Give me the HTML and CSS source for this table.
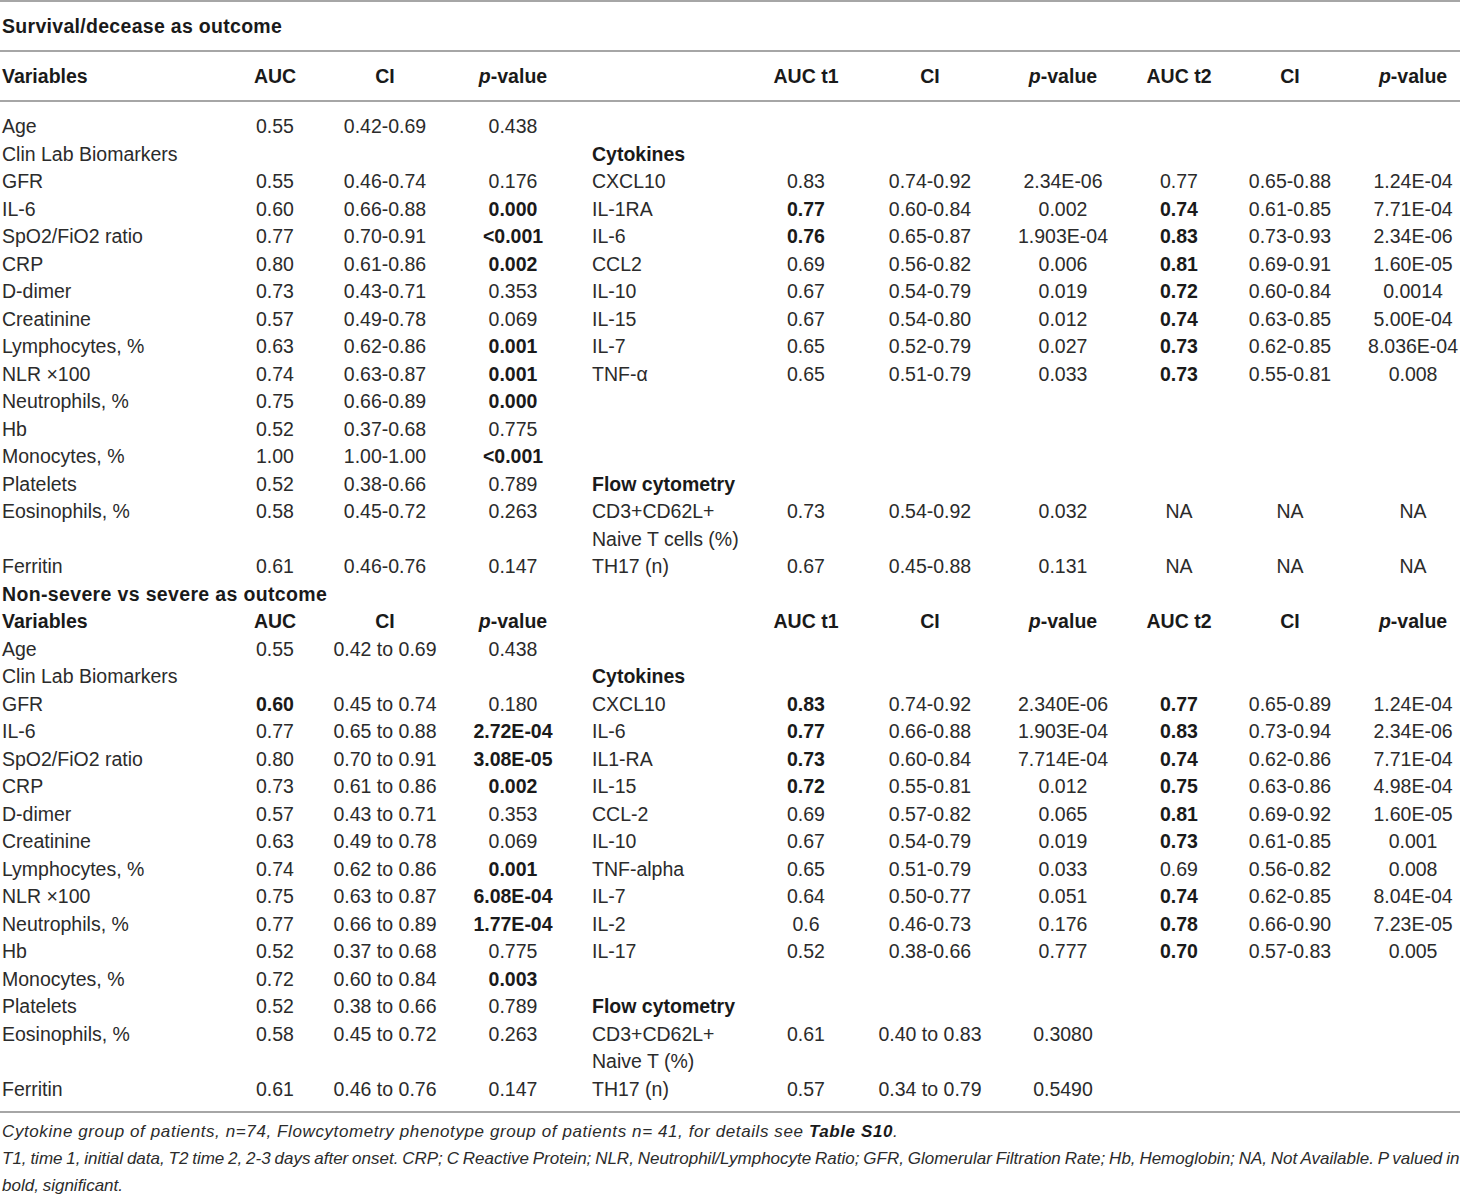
FILE: index.html
```html
<!DOCTYPE html>
<html lang="en">
<head>
<meta charset="utf-8">
<title>AUC table</title>
<link rel="stylesheet" href="styles.css">
</head>
<body>
<table class="auc">
<colgroup>
<col class="w1"><col class="w2"><col class="w3"><col class="w4"><col class="w5"><col class="w6"><col class="w7"><col class="w8"><col class="w9"><col class="w10"><col class="w11">
</colgroup>
<thead>
<tr class="title"><th colspan="11">Survival/decease as outcome</th></tr>
<tr class="head"><th>Variables</th><th>AUC</th><th>CI</th><th><i>p</i>-value</th><th></th><th>AUC t1</th><th>CI</th><th><i>p</i>-value</th><th>AUC t2</th><th>CI</th><th class="plast"><i>p</i>-value</th></tr>
</thead>
<tbody>
<tr class="first"><td>Age</td><td>0.55</td><td>0.42-0.69</td><td>0.438</td><td></td><td></td><td></td><td></td><td></td><td></td><td class="plast"></td></tr>
<tr><td>Clin Lab Biomarkers</td><td></td><td></td><td></td><td class="b">Cytokines</td><td></td><td></td><td></td><td></td><td></td><td class="plast"></td></tr>
<tr><td>GFR</td><td>0.55</td><td>0.46-0.74</td><td>0.176</td><td>CXCL10</td><td>0.83</td><td>0.74-0.92</td><td>2.34E-06</td><td>0.77</td><td>0.65-0.88</td><td class="plast">1.24E-04</td></tr>
<tr><td>IL-6</td><td>0.60</td><td>0.66-0.88</td><td class="b">0.000</td><td>IL-1RA</td><td class="b">0.77</td><td>0.60-0.84</td><td>0.002</td><td class="b">0.74</td><td>0.61-0.85</td><td class="plast">7.71E-04</td></tr>
<tr><td>SpO2/FiO2 ratio</td><td>0.77</td><td>0.70-0.91</td><td class="b">&lt;0.001</td><td>IL-6</td><td class="b">0.76</td><td>0.65-0.87</td><td>1.903E-04</td><td class="b">0.83</td><td>0.73-0.93</td><td class="plast">2.34E-06</td></tr>
<tr><td>CRP</td><td>0.80</td><td>0.61-0.86</td><td class="b">0.002</td><td>CCL2</td><td>0.69</td><td>0.56-0.82</td><td>0.006</td><td class="b">0.81</td><td>0.69-0.91</td><td class="plast">1.60E-05</td></tr>
<tr><td>D-dimer</td><td>0.73</td><td>0.43-0.71</td><td>0.353</td><td>IL-10</td><td>0.67</td><td>0.54-0.79</td><td>0.019</td><td class="b">0.72</td><td>0.60-0.84</td><td class="plast">0.0014</td></tr>
<tr><td>Creatinine</td><td>0.57</td><td>0.49-0.78</td><td>0.069</td><td>IL-15</td><td>0.67</td><td>0.54-0.80</td><td>0.012</td><td class="b">0.74</td><td>0.63-0.85</td><td class="plast">5.00E-04</td></tr>
<tr><td>Lymphocytes, %</td><td>0.63</td><td>0.62-0.86</td><td class="b">0.001</td><td>IL-7</td><td>0.65</td><td>0.52-0.79</td><td>0.027</td><td class="b">0.73</td><td>0.62-0.85</td><td class="plast">8.036E-04</td></tr>
<tr><td>NLR ×100</td><td>0.74</td><td>0.63-0.87</td><td class="b">0.001</td><td>TNF-α</td><td>0.65</td><td>0.51-0.79</td><td>0.033</td><td class="b">0.73</td><td>0.55-0.81</td><td class="plast">0.008</td></tr>
<tr><td>Neutrophils, %</td><td>0.75</td><td>0.66-0.89</td><td class="b">0.000</td><td></td><td></td><td></td><td></td><td></td><td></td><td class="plast"></td></tr>
<tr><td>Hb</td><td>0.52</td><td>0.37-0.68</td><td>0.775</td><td></td><td></td><td></td><td></td><td></td><td></td><td class="plast"></td></tr>
<tr><td>Monocytes, %</td><td>1.00</td><td>1.00-1.00</td><td class="b">&lt;0.001</td><td></td><td></td><td></td><td></td><td></td><td></td><td class="plast"></td></tr>
<tr><td>Platelets</td><td>0.52</td><td>0.38-0.66</td><td>0.789</td><td class="b">Flow cytometry</td><td></td><td></td><td></td><td></td><td></td><td class="plast"></td></tr>
<tr><td>Eosinophils, %</td><td>0.58</td><td>0.45-0.72</td><td>0.263</td><td>CD3+CD62L+</td><td>0.73</td><td>0.54-0.92</td><td>0.032</td><td>NA</td><td>NA</td><td class="plast">NA</td></tr>
<tr><td></td><td></td><td></td><td></td><td>Naive T cells (%)</td><td></td><td></td><td></td><td></td><td></td><td class="plast"></td></tr>
<tr><td>Ferritin</td><td>0.61</td><td>0.46-0.76</td><td>0.147</td><td>TH17 (n)</td><td>0.67</td><td>0.45-0.88</td><td>0.131</td><td>NA</td><td>NA</td><td class="plast">NA</td></tr>

<tr class="subtitle"><td colspan="11">Non-severe vs severe as outcome</td></tr>
<tr class="subhead"><td>Variables</td><td>AUC</td><td>CI</td><td><i>p</i>-value</td><td></td><td>AUC t1</td><td>CI</td><td><i>p</i>-value</td><td>AUC t2</td><td>CI</td><td class="plast"><i>p</i>-value</td></tr>
<tr><td>Age</td><td>0.55</td><td>0.42 to 0.69</td><td>0.438</td><td></td><td></td><td></td><td></td><td></td><td></td><td class="plast"></td></tr>
<tr><td>Clin Lab Biomarkers</td><td></td><td></td><td></td><td class="b">Cytokines</td><td></td><td></td><td></td><td></td><td></td><td class="plast"></td></tr>
<tr><td>GFR</td><td class="b">0.60</td><td>0.45 to 0.74</td><td>0.180</td><td>CXCL10</td><td class="b">0.83</td><td>0.74-0.92</td><td>2.340E-06</td><td class="b">0.77</td><td>0.65-0.89</td><td class="plast">1.24E-04</td></tr>
<tr><td>IL-6</td><td>0.77</td><td>0.65 to 0.88</td><td class="b">2.72E-04</td><td>IL-6</td><td class="b">0.77</td><td>0.66-0.88</td><td>1.903E-04</td><td class="b">0.83</td><td>0.73-0.94</td><td class="plast">2.34E-06</td></tr>
<tr><td>SpO2/FiO2 ratio</td><td>0.80</td><td>0.70 to 0.91</td><td class="b">3.08E-05</td><td>IL1-RA</td><td class="b">0.73</td><td>0.60-0.84</td><td>7.714E-04</td><td class="b">0.74</td><td>0.62-0.86</td><td class="plast">7.71E-04</td></tr>
<tr><td>CRP</td><td>0.73</td><td>0.61 to 0.86</td><td class="b">0.002</td><td>IL-15</td><td class="b">0.72</td><td>0.55-0.81</td><td>0.012</td><td class="b">0.75</td><td>0.63-0.86</td><td class="plast">4.98E-04</td></tr>
<tr><td>D-dimer</td><td>0.57</td><td>0.43 to 0.71</td><td>0.353</td><td>CCL-2</td><td>0.69</td><td>0.57-0.82</td><td>0.065</td><td class="b">0.81</td><td>0.69-0.92</td><td class="plast">1.60E-05</td></tr>
<tr><td>Creatinine</td><td>0.63</td><td>0.49 to 0.78</td><td>0.069</td><td>IL-10</td><td>0.67</td><td>0.54-0.79</td><td>0.019</td><td class="b">0.73</td><td>0.61-0.85</td><td class="plast">0.001</td></tr>
<tr><td>Lymphocytes, %</td><td>0.74</td><td>0.62 to 0.86</td><td class="b">0.001</td><td>TNF-alpha</td><td>0.65</td><td>0.51-0.79</td><td>0.033</td><td>0.69</td><td>0.56-0.82</td><td class="plast">0.008</td></tr>
<tr><td>NLR ×100</td><td>0.75</td><td>0.63 to 0.87</td><td class="b">6.08E-04</td><td>IL-7</td><td>0.64</td><td>0.50-0.77</td><td>0.051</td><td class="b">0.74</td><td>0.62-0.85</td><td class="plast">8.04E-04</td></tr>
<tr><td>Neutrophils, %</td><td>0.77</td><td>0.66 to 0.89</td><td class="b">1.77E-04</td><td>IL-2</td><td>0.6</td><td>0.46-0.73</td><td>0.176</td><td class="b">0.78</td><td>0.66-0.90</td><td class="plast">7.23E-05</td></tr>
<tr><td>Hb</td><td>0.52</td><td>0.37 to 0.68</td><td>0.775</td><td>IL-17</td><td>0.52</td><td>0.38-0.66</td><td>0.777</td><td class="b">0.70</td><td>0.57-0.83</td><td class="plast">0.005</td></tr>
<tr><td>Monocytes, %</td><td>0.72</td><td>0.60 to 0.84</td><td class="b">0.003</td><td></td><td></td><td></td><td></td><td></td><td></td><td class="plast"></td></tr>
<tr><td>Platelets</td><td>0.52</td><td>0.38 to 0.66</td><td>0.789</td><td class="b">Flow cytometry</td><td></td><td></td><td></td><td></td><td></td><td class="plast"></td></tr>
<tr><td>Eosinophils, %</td><td>0.58</td><td>0.45 to 0.72</td><td>0.263</td><td>CD3+CD62L+</td><td>0.61</td><td>0.40 to 0.83</td><td>0.3080</td><td></td><td></td><td class="plast"></td></tr>
<tr><td></td><td></td><td></td><td></td><td>Naive T (%)</td><td></td><td></td><td></td><td></td><td></td><td class="plast"></td></tr>
<tr class="last"><td>Ferritin</td><td>0.61</td><td>0.46 to 0.76</td><td>0.147</td><td>TH17 (n)</td><td>0.57</td><td>0.34 to 0.79</td><td>0.5490</td><td></td><td></td><td class="plast"></td></tr>
</tbody>
</table>
<div class="notes">
<p class="note1">Cytokine group of patients, n=74, Flowcytometry phenotype group of patients n= 41, for details see <b>Table S10</b>.</p>
<p class="note2">T1, time 1, initial data, T2 time 2, 2-3 days after onset. CRP; C Reactive Protein; NLR, Neutrophil/Lymphocyte Ratio; GFR, Glomerular Filtration Rate; Hb, Hemoglobin; NA, Not Available. P valued in bold, significant.</p>
</div>
</body>
</html>
```

FILE: styles.css
```css
html, body {
  margin: 0;
  padding: 0;
  background: #ffffff;
}

body {
  width: 1460px;
  font-family: "Liberation Sans", Arial, sans-serif;
  color: #2b2b2b;
}

.auc {
  width: 1460px;
  table-layout: fixed;
  border-collapse: collapse;
  border-spacing: 0;
  font-size: 19.5px;
  border-top: 2px solid #a6a6a6;
  border-bottom: 2px solid #a6a6a6;
}

.w1 { width: 220px; }
.w2 { width: 110px; }
.w3 { width: 110px; }
.w4 { width: 146px; }
.w5 { width: 160px; }
.w6 { width: 120px; }
.w7 { width: 128px; }
.w8 { width: 138px; }
.w9 { width: 94px; }
.w10 { width: 128px; }
.w11 { width: 106px; }

.auc th,
.auc td {
  padding: 0;
  height: 27.5px;
  line-height: 27.5px;
  text-align: center;
  white-space: nowrap;
  vertical-align: middle;
  font-weight: normal;
}

.auc th {
  font-weight: bold;
  color: #1a1a1a;
}

.auc th i,
.auc td i {
  font-style: italic;
}

.auc td:first-child,
.auc th:first-child {
  text-align: left;
  padding-left: 2px;
}

.auc td:nth-child(5),
.auc th:nth-child(5) {
  text-align: left;
  padding-left: 6px;
}

.auc .plast {
  padding-left: 12px;
}

.auc .title th {
  height: 48px;
  line-height: 48px;
  text-align: left;
  padding-left: 2px;
  letter-spacing: 0.3px;
  border-bottom: 2px solid #a6a6a6;
}

.auc .head th {
  height: 48px;
  line-height: 48px;
  border-bottom: 2px solid #a6a6a6;
}

.auc .first td {
  height: 38.5px;
  padding-top: 11px;
  box-sizing: border-box;
}

.auc .subtitle td {
  text-align: left;
  padding-left: 2px;
  font-weight: bold;
  letter-spacing: 0.35px;
  color: #1a1a1a;
}

.auc .subhead td {
  font-weight: bold;
  color: #1a1a1a;
}

.auc .subhead td:nth-child(5) {
  padding-left: 6px;
}

.auc .last td {
  height: 35.5px;
  padding-bottom: 8px;
  box-sizing: border-box;
}

.auc td.b {
  font-weight: bold;
  color: #1a1a1a;
}

.notes {
  padding-top: 5px;
  font-size: 17px;
  font-style: italic;
  line-height: 27px;
  color: #2b2b2b;
}

.notes p {
  margin: 0;
  padding-left: 2px;
}

.notes .note1 {
  letter-spacing: 0.6px;
}

.notes .note2 {
  word-spacing: -0.9px;
}

.notes b {
  font-weight: bold;
  color: #1a1a1a;
}
```
